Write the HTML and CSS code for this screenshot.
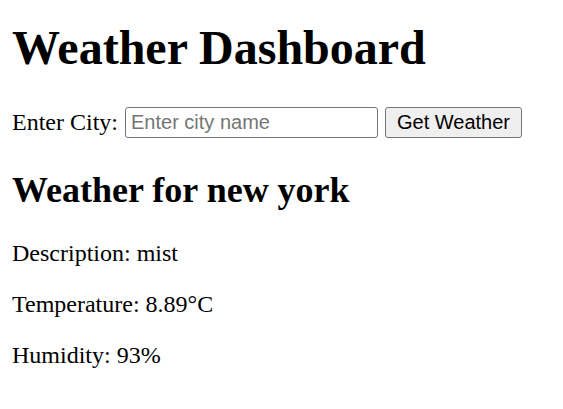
FILE: index.html
```html
<!DOCTYPE html>
<html>
<head>
<meta charset="utf-8">
<title>Weather Dashboard</title>
<link rel="stylesheet" href="styles.css">
</head>
<body>
<h1 class="title">Weather Dashboard</h1>
<div class="search">
  <label class="label" for="city">Enter City:</label>
  <input class="city-input" id="city" type="text" placeholder="Enter city name">
  <button class="btn">Get Weather</button>
</div>
<div class="result">
  <h2 class="result-title">Weather for new york</h2>
  <p class="row">Description: mist</p>
  <p class="row">Temperature: 8.89°C</p>
  <p class="row">Humidity: 93%</p>
</div>
</body>
</html>
```

FILE: styles.css
```css
html, body {
  background: #fff;
}
body {
  margin: 0;
  padding: 0 12px;
  font-family: "Liberation Serif", "Times New Roman", serif;
  font-size: 24px;
  color: #000;
}
.title {
  font-size: 48px;
  font-weight: bold;
  margin: 20px 0 32px;
  line-height: 55px;
}
.search {
  display: flex;
  align-items: center;
}
.label {
  margin-right: 7px;
}
.city-input {
  box-sizing: border-box;
  width: 253px;
  height: 31px;
  margin: 0 7px 0 0;
  padding: 1px 5px;
  border: 1px solid #767676;
  border-radius: 3px;
  font-family: "Liberation Sans", Arial, sans-serif;
  font-size: 20px;
  color: #000;
  background: #fff;
}
.city-input::placeholder {
  color: #757575;
}
.btn {
  box-sizing: border-box;
  width: 137px;
  height: 31px;
  padding: 1px 9px;
  border: 1px solid #767676;
  border-radius: 3px;
  background: #efefef;
  font-family: "Liberation Sans", Arial, sans-serif;
  font-size: 20px;
  color: #000;
}
.result-title {
  font-size: 36px;
  font-weight: bold;
  margin: 32px 0 29px;
  line-height: 41px;
}
.row {
  margin: 0 0 24px;
  line-height: 27px;
}
```
